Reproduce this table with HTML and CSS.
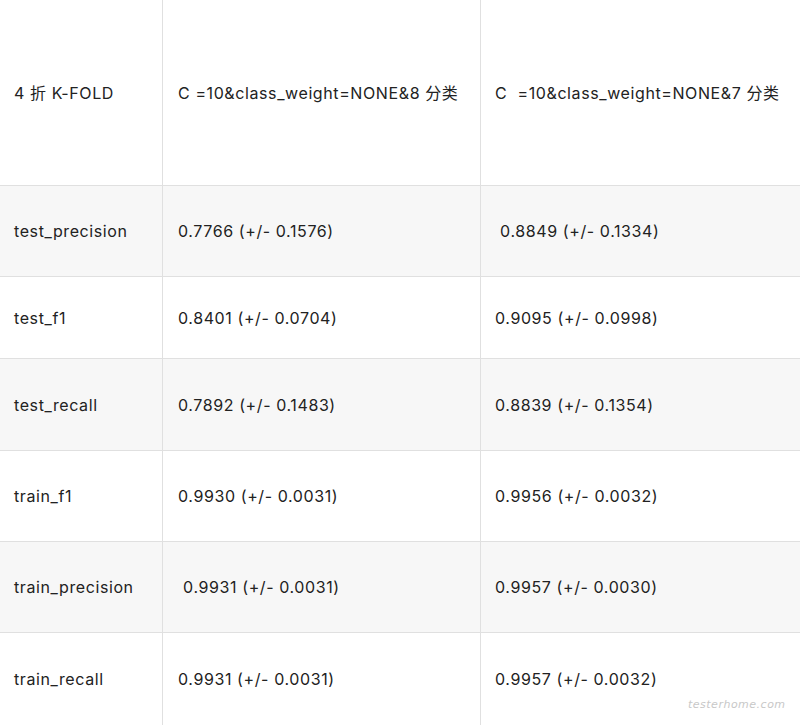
FILE: index.html
```html
<!DOCTYPE html>
<html>
<head>
<meta charset="utf-8">
<link rel="stylesheet" href="styles.css">
</head>
<body>
<table class="grid">
  <tr class="r-head">
    <td class="c1">4 折 K-FOLD</td>
    <td class="c2">C =10&amp;class_weight=NONE&amp;8 分类</td>
    <td class="c3">C&nbsp; =10&amp;class_weight=NONE&amp;7 分类</td>
  </tr>
  <tr class="r1 alt">
    <td class="c1">test_precision</td>
    <td class="c2">0.7766 (+/- 0.1576)</td>
    <td class="c3">&nbsp;0.8849 (+/- 0.1334)</td>
  </tr>
  <tr class="r2">
    <td class="c1">test_f1</td>
    <td class="c2">0.8401 (+/- 0.0704)</td>
    <td class="c3">0.9095 (+/- 0.0998)</td>
  </tr>
  <tr class="r3 alt">
    <td class="c1">test_recall</td>
    <td class="c2">0.7892 (+/- 0.1483)</td>
    <td class="c3">0.8839 (+/- 0.1354)</td>
  </tr>
  <tr class="r4">
    <td class="c1">train_f1</td>
    <td class="c2">0.9930 (+/- 0.0031)</td>
    <td class="c3">0.9956 (+/- 0.0032)</td>
  </tr>
  <tr class="r5 alt">
    <td class="c1">train_precision</td>
    <td class="c2">&nbsp;0.9931 (+/- 0.0031)</td>
    <td class="c3">0.9957 (+/- 0.0030)</td>
  </tr>
  <tr class="r6">
    <td class="c1">train_recall</td>
    <td class="c2">0.9931 (+/- 0.0031)</td>
    <td class="c3">0.9957 (+/- 0.0032)</td>
  </tr>
</table>
<div class="watermark">testerhome.com</div>
</body>
</html>
```
FILE: styles.css
```css
html, body {
  margin: 0;
  padding: 0;
  background: #fff;
  overflow: hidden;
}
body {
  width: 800px;
  height: 725px;
  position: relative;
  font-family: "Inter", "Noto Sans CJK SC", sans-serif;
  font-size: 16px;
  letter-spacing: 0.6px;
  color: #222;
}
.grid {
  border-collapse: separate;
  border-spacing: 0;
  width: 800px;
  table-layout: fixed;
}
.grid td {
  box-sizing: border-box;
  padding: 0 4px 0 14px;
  border-bottom: 1px solid #e0e0e0;
  vertical-align: middle;
  white-space: nowrap;
  line-height: 20px;
}
.grid td.c1 { width: 163px; border-right: 1px solid #e0e0e0; }
.grid td.c2 { width: 318px; border-right: 1px solid #e0e0e0; padding-left: 15px; }
.grid td.c3 { width: 319px; }
.alt td { background: #f7f7f7; }
.r-head td { height: 186px; }
.r1 td { height: 91px; }
.r2 td { height: 82px; }
.r3 td { height: 92px; }
.r4 td { height: 91px; }
.r5 td { height: 91px; }
.r6 td { height: 93px; }
.watermark {
  position: absolute;
  left: 688px;
  top: 698px;
  font-family: "DejaVu Sans", sans-serif;
  font-size: 11px;
  letter-spacing: 0.5px;
  color: #c8c8c8;
  font-style: italic;
}
```
